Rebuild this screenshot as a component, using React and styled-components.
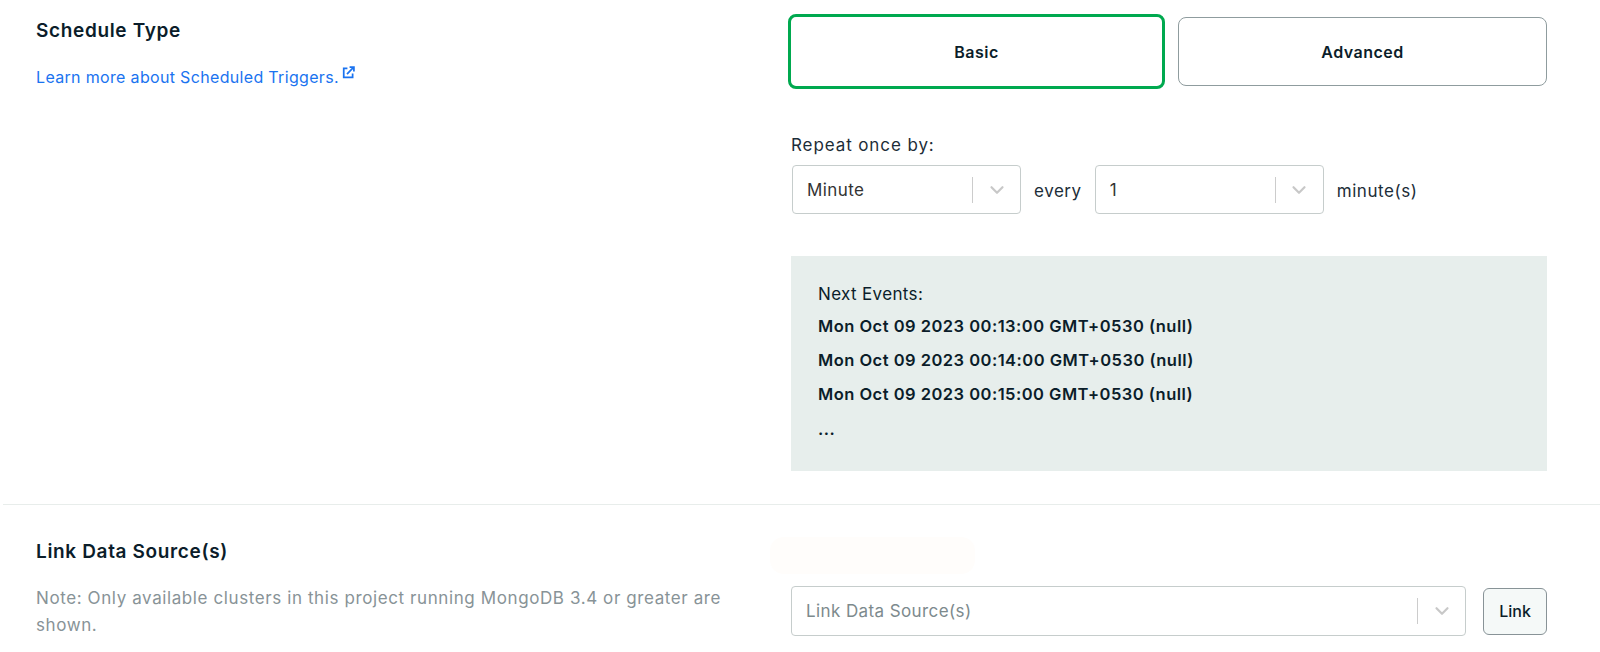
import React from "react";
import styled, { createGlobalStyle } from "styled-components";
import { ChevronDown } from "lucide-react";

const Global = createGlobalStyle`
  html, body { margin: 0; padding: 0; background: #fff; overflow: hidden; }
  body { font-family: Inter, "Liberation Sans", sans-serif; color: #0b1d2a; }
`;

const Page = styled.div`
  width: 1600px;
  height: 652px;
  overflow: hidden;
  position: relative;
`;

const Section = styled.section`
  display: grid;
  grid-template-columns: 791px 756px;
  padding-top: ${(p) => p.$top}px;
  height: ${(p) => p.$height}px;
  box-sizing: border-box;
`;

const Divider = styled.hr`
  margin: 0 0 0 3px;
  border: 0;
  height: 1px;
  background: #e8edeb;
`;

const Left = styled.div`
  padding-left: 36px;
`;

const Title = styled.h2`
  margin: ${(p) => p.$top}px 0 0;
  font-size: 19px;
  line-height: 24px;
  font-weight: 600;
  letter-spacing: 0.65px;
  color: #0b1d2a;
`;

const DocLink = styled.a`
  display: inline-flex;
  align-items: flex-start;
  gap: 3px;
  margin-top: 23px;
  font-size: 16px;
  line-height: 22px;
  letter-spacing: 0.33px;
  color: #1a73f0;
`;

const Note = styled.p`
  margin: 21px 0 0;
  width: 700px;
  font-size: 17px;
  line-height: 27px;
  letter-spacing: 0.6px;
  color: #889397;
`;

const ModeRow = styled.div`
  display: grid;
  grid-template-columns: 377px 369px;
  gap: 13px;
  align-items: center;
  margin-left: -3px;
  width: 759px;
`;

const ModeButton = styled.button`
  box-sizing: border-box;
  height: ${(p) => (p.$active ? 75 : 69)}px;
  border: ${(p) => (p.$active ? "3px solid #00a94f" : "1.5px solid #8f9c9e")};
  border-radius: 8px;
  background: #fff;
  font: 600 16px Inter, sans-serif;
  letter-spacing: 0.5px;
  color: #0b1d2a;
`;

const RepeatLabel = styled.div`
  margin-top: 45px;
  font-size: 17px;
  line-height: 22px;
  letter-spacing: 0.9px;
  color: #1c2d38;
`;

const RepeatRow = styled.div`
  display: flex;
  align-items: center;
  margin-top: 9px;
  margin-left: 1px;
  font-size: 17px;
  letter-spacing: 0.55px;
  color: #1c2d38;
`;

const Word = styled.span`
  margin: 2px ${(p) => p.$right}px 0 ${(p) => p.$left}px;
`;

const SelectBox = styled.div`
  box-sizing: border-box;
  display: flex;
  align-items: center;
  flex: ${(p) => (p.$grow ? "1" : "none")};
  width: ${(p) => (p.$grow ? "auto" : "229px")};
  height: ${(p) => p.$height}px;
  padding-left: 14px;
  border: 1px solid #c6cdcc;
  border-radius: 4px;
  background: #fff;
  font-size: 17px;
  letter-spacing: 0.4px;
  color: ${(p) => (p.$muted ? "#7d8a8d" : "#333")};
`;

const SelectValue = styled.span`
  flex: 1;
`;

const Separator = styled.span`
  width: 1px;
  height: 26px;
  background: #cccccc;
`;

const Caret = styled.span`
  display: flex;
  justify-content: center;
  width: 47px;
  color: #c8c8c8;
`;

const Events = styled.div`
  box-sizing: border-box;
  height: 215px;
  margin-top: 42px;
  padding: 26px 27px 0;
  background: #e7eeec;
  font-size: 17px;
  letter-spacing: 0.35px;
  color: #0b1d2a;
`;

const EventsHead = styled.div`
  line-height: 24px;
  margin-bottom: 3px;
`;

const EventLine = styled.div`
  font-size: 16.5px;
  font-weight: 600;
  line-height: 34px;
  letter-spacing: 0.48px;
`;

const Dots = styled(EventLine)`
  margin-top: 1px;
`;

const LinkRow = styled.div`
  display: flex;
  align-items: center;
  gap: 17px;
  margin-top: 81px;
  align-self: start;
`;

const LinkButton = styled.button`
  box-sizing: border-box;
  width: 64px;
  height: 47px;
  border: 1.5px solid #889397;
  border-radius: 6px;
  background: #f5f9f8;
  font: 500 16px Inter, sans-serif;
  color: #0b1d2a;
`;

const Blob = styled.div`
  position: absolute;
  left: 770px;
  top: 537px;
  width: 205px;
  height: 37px;
  border-radius: 14px;
  background: #fffdfb;
`;

const ExternalIcon = () => (
  <svg width="13" height="13" viewBox="0 0 12 12" fill="none" stroke="#1a73f0" strokeWidth="1.6">
    <path d="M5 2.2H1.6v8.2h8.2V7" />
    <path d="M4.6 7.4 10.4 1.6M7 1h4v4" />
  </svg>
);

const Select = ({ value, muted, grow, height = 49 }) => (
  <SelectBox $muted={muted} $grow={grow} $height={height}>
    <SelectValue>{value}</SelectValue>
    <Separator />
    <Caret>
      <ChevronDown size={22} strokeWidth={2.4} />
    </Caret>
  </SelectBox>
);

export default function App() {
  return (
    <Page>
      <Global />
      <Blob />
      <Section $top={14} $height={504}>
        <Left>
          <Title $top={5}>Schedule Type</Title>
          <DocLink>
            Learn more about Scheduled Triggers.
            <ExternalIcon />
          </DocLink>
        </Left>
        <div>
          <ModeRow>
            <ModeButton $active>Basic</ModeButton>
            <ModeButton>Advanced</ModeButton>
          </ModeRow>
          <RepeatLabel>Repeat once by:</RepeatLabel>
          <RepeatRow>
            <Select value="Minute" />
            <Word $left={13} $right={13}>every</Word>
            <Select value="1" />
            <Word $left={13} $right={0}>minute(s)</Word>
          </RepeatRow>
          <Events>
            <EventsHead>Next Events:</EventsHead>
            <EventLine>Mon Oct 09 2023 00:13:00 GMT+0530 (null)</EventLine>
            <EventLine>Mon Oct 09 2023 00:14:00 GMT+0530 (null)</EventLine>
            <EventLine>Mon Oct 09 2023 00:15:00 GMT+0530 (null)</EventLine>
            <Dots>...</Dots>
          </Events>
        </div>
      </Section>
      <Divider />
      <Section $top={0} $height={147}>
        <Left>
          <Title $top={35}>Link Data Source(s)</Title>
          <Note>Note: Only available clusters in this project running MongoDB 3.4 or greater are shown.</Note>
        </Left>
        <LinkRow>
          <Select value="Link Data Source(s)" muted grow height={50} />
          <LinkButton>Link</LinkButton>
        </LinkRow>
      </Section>
    </Page>
  );
}
